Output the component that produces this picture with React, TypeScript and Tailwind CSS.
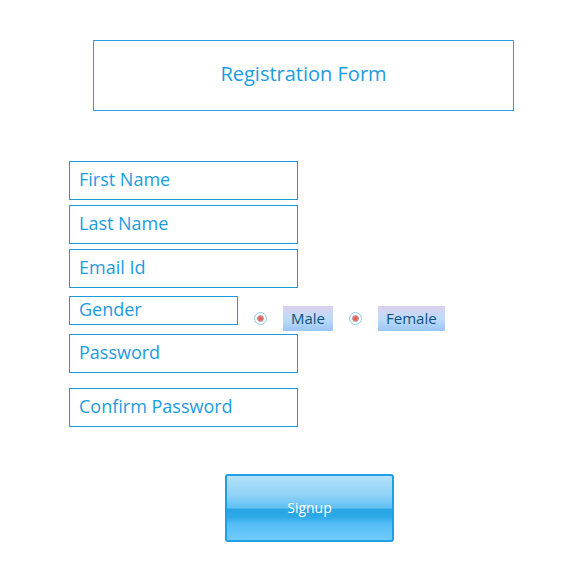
import React from "react";

type FieldProps = { label: string; type?: string };

function Field({ label, type = "text" }: FieldProps) {
  return (
    <input
      type={type}
      aria-label={label}
      placeholder={label}
      className="block h-[39px] w-[229px] max-w-full border border-[#1b9add] bg-white px-[9px] pb-[3px] text-lg text-[#1b9ce2] outline-none placeholder:text-[#1b9ce2] placeholder:opacity-100 focus:border-[#0a78b8]"
    />
  );
}

function GenderOption({ label, value }: { label: string; value: string }) {
  return (
    <label className="flex items-center gap-4">
      <input
        type="radio"
        name="gender"
        value={value}
        className="m-0 size-[13px] shrink-0 appearance-none rounded-full border border-[#8ccbe6] bg-[radial-gradient(circle_at_center,#f0554a_0,#e2706c_2px,#b9a0b4_3px,#ffffff_4px)]"
      />
      <span className="flex h-[25px] items-center bg-linear-to-b from-[#dccfee] via-[#bddcf8] to-[#9cc6f8] px-2 text-[15px] text-[#0f5080]">
        {label}
      </span>
    </label>
  );
}

export default function App() {
  return (
    <main className="min-h-screen bg-white pt-10 pb-8 font-['Open_Sans','Noto_Sans',sans-serif]">
      <header className="mr-[57px] ml-[93px] flex h-[71px] items-center justify-center border border-[#2b9fe4] pb-[3px]">
        <h1 className="text-xl text-[#1b9ce2]">Registration Form</h1>
      </header>

      <form className="mt-[50px] pl-[69px]" onSubmit={(e) => e.preventDefault()}>
        <div className="flex flex-col gap-[5px]">
          <Field label="First Name" />
          <Field label="Last Name" />
          <Field label="Email Id" type="email" />
        </div>

        <div role="radiogroup" aria-labelledby="gender-label" className="mt-2 flex items-start gap-4">
          <span
            id="gender-label"
            className="flex h-[29px] w-[169px] items-center border border-[#1b9add] px-[9px] pb-[3px] text-lg text-[#1b9ce2]"
          >
            Gender
          </span>
          <div className="flex gap-4 pt-[10px]">
            <GenderOption label="Male" value="male" />
            <GenderOption label="Female" value="female" />
          </div>
        </div>

        <div className="mt-[3px] flex flex-col gap-[15px]">
          <Field label="Password" type="password" />
          <Field label="Confirm Password" type="password" />
        </div>

        <button
          type="submit"
          className="mt-[47px] ml-[156px] flex h-[68px] w-[169px] items-center justify-center rounded-[3px] border-2 border-[#1fa0e6] bg-[linear-gradient(to_bottom,#b5e1fa_0%,#8fd2f8_30%,#5fc0f3_50%,#29a5e4_52%,#2da9e8_64%,#55bdf5_75%,#6fcbfb_100%)] text-sm text-white"
        >
          Signup
        </button>
      </form>
    </main>
  );
}
